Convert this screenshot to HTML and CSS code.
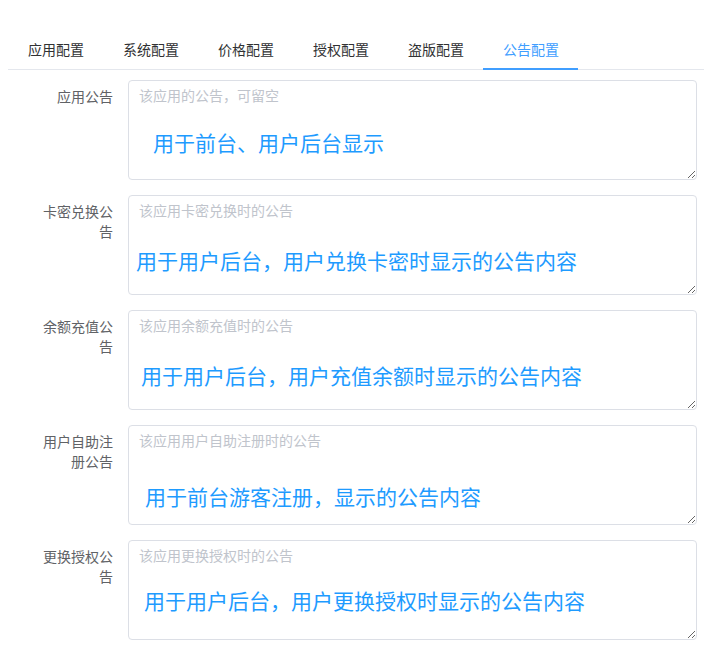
FILE: index.html
```html
<!DOCTYPE html>
<html lang="zh-CN">
<head>
<meta charset="utf-8">
<title>公告配置</title>
<link rel="stylesheet" href="styles.css">
</head>
<body>
<div class="page">
  <div class="tabs">
    <div class="tab">应用配置</div>
    <div class="tab">系统配置</div>
    <div class="tab">价格配置</div>
    <div class="tab">授权配置</div>
    <div class="tab">盗版配置</div>
    <div class="tab active">公告配置</div>
  </div>
  <form class="form">
    <div class="item">
      <label class="label">应用公告</label>
      <div class="field">
        <textarea class="ta" placeholder="该应用的公告，可留空"></textarea>
        <span class="note n1">用于前台、用户后台显示</span>
      </div>
    </div>
    <div class="item">
      <label class="label">卡密兑换公告</label>
      <div class="field">
        <textarea class="ta" placeholder="该应用卡密兑换时的公告"></textarea>
        <span class="note n2">用于用户后台，用户兑换卡密时显示的公告内容</span>
      </div>
    </div>
    <div class="item">
      <label class="label">余额充值公告</label>
      <div class="field">
        <textarea class="ta" placeholder="该应用余额充值时的公告"></textarea>
        <span class="note n3">用于用户后台，用户充值余额时显示的公告内容</span>
      </div>
    </div>
    <div class="item">
      <label class="label">用户自助注册公告</label>
      <div class="field">
        <textarea class="ta" placeholder="该应用用户自助注册时的公告"></textarea>
        <span class="note n4">用于前台游客注册，显示的公告内容</span>
      </div>
    </div>
    <div class="item">
      <label class="label">更换授权公告</label>
      <div class="field">
        <textarea class="ta" placeholder="该应用更换授权时的公告"></textarea>
        <span class="note n5">用于用户后台，用户更换授权时显示的公告内容</span>
      </div>
    </div>
  </form>
</div>
</body>
</html>
```

FILE: styles.css
```css
html, body {
  margin: 0;
  padding: 0;
  background: #ffffff;
}
body {
  padding: 8px 0 0 8px;
  font-family: "Noto Sans CJK SC", "Noto Sans", sans-serif;
  font-size: 14px;
  color: #606266;
}
.page {
  width: 696px;
}
.tabs {
  display: flex;
  margin-top: 21px;
  border-bottom: 1px solid #e4e7ed;
}
.tab {
  position: relative;
  box-sizing: border-box;
  width: 95px;
  height: 40px;
  line-height: 40px;
  padding: 0 0 0 20px;
  white-space: nowrap;
  color: #303133;
  font-size: 14px;
}
.tab.active {
  color: #409eff;
}
.tab.active::after {
  content: "";
  position: absolute;
  left: 0;
  right: 0;
  bottom: -1px;
  height: 2px;
  background: #409eff;
}
.form {
  margin: 10px 0 0 0;
  padding-right: 7px;
}
.item {
  display: flex;
  margin-bottom: 15px;
}
.label {
  box-sizing: border-box;
  width: 120px;
  flex: none;
  padding: 6px 15px 0 30px;
  text-align: right;
  line-height: 20px;
  color: #606266;
}
.field {
  position: relative;
  flex: 1;
  display: flex;
}
.ta {
  box-sizing: border-box;
  width: 100%;
  height: 100px;
  margin: 0;
  padding: 4px 10px;
  border: 1px solid #dcdfe6;
  border-radius: 4px;
  font-family: "Noto Sans CJK SC", "Noto Sans", sans-serif;
  font-size: 14px;
  line-height: 21px;
  color: #606266;
  background: #fff;
  outline: none;
}
.ta::placeholder {
  color: #c0c4cc;
}
.note {
  position: absolute;
  font-size: 21px;
  line-height: 21px;
  color: #1e9bff;
  white-space: nowrap;
  pointer-events: none;
}
.n1 { left: 25px; top: 52px; }
.n2 { left: 8px; top: 55px; }
.n3 { left: 13px; top: 55px; }
.n4 { left: 17px; top: 61px; }
.n5 { left: 16px; top: 50px; }
```
